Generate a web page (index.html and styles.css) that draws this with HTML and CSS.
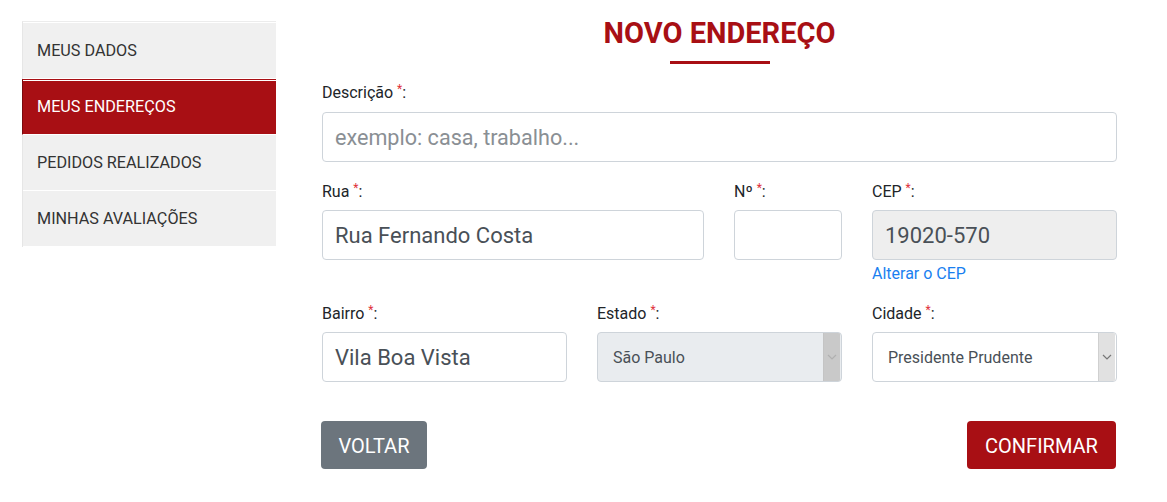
FILE: index.html
```html
<!DOCTYPE html>
<html lang="pt-BR">
<head>
<meta charset="utf-8">
<title>Novo endereço</title>
<link rel="stylesheet" href="styles.css">
</head>
<body>
<div class="page">
  <nav class="sidebar">
    <a class="side-item">MEUS DADOS</a>
    <a class="side-item active">MEUS ENDEREÇOS</a>
    <a class="side-item">PEDIDOS REALIZADOS</a>
    <a class="side-item">MINHAS AVALIAÇÕES</a>
  </nav>
  <main class="content">
    <h1 class="title">NOVO ENDEREÇO</h1>
    <div class="title-bar"></div>
    <form class="form">
      <div class="row">
        <div class="field col-12">
          <label class="label">Descrição <span class="req">*</span>:</label>
          <div class="input placeholder">exemplo: casa, trabalho...</div>
        </div>
      </div>
      <div class="row">
        <div class="field col-6">
          <label class="label">Rua <span class="req">*</span>:</label>
          <div class="input">Rua Fernando Costa</div>
        </div>
        <div class="field col-2">
          <label class="label">Nº <span class="req">*</span>:</label>
          <div class="input"></div>
        </div>
        <div class="field col-4">
          <label class="label">CEP <span class="req">*</span>:</label>
          <div class="input disabled">19020-570</div>
          <a class="link">Alterar o CEP</a>
        </div>
      </div>
      <div class="row">
        <div class="field col-4">
          <label class="label">Bairro <span class="req">*</span>:</label>
          <div class="input">Vila Boa Vista</div>
        </div>
        <div class="field col-4">
          <label class="label">Estado <span class="req">*</span>:</label>
          <div class="select disabled"><span class="select-text">São Paulo</span><span class="arrow"><svg width="10" height="6" viewBox="0 0 10 6"><path d="M1 1l4 4 4-4" fill="none" stroke="#b0b0b0" stroke-width="1.2"/></svg></span></div>
        </div>
        <div class="field col-4">
          <label class="label">Cidade <span class="req">*</span>:</label>
          <div class="select"><span class="select-text">Presidente Prudente</span><span class="arrow"><svg width="10" height="6" viewBox="0 0 10 6"><path d="M1 1l4 4 4-4" fill="none" stroke="#777" stroke-width="1.2"/></svg></span></div>
        </div>
      </div>
      <div class="actions">
        <button type="button" class="btn btn-gray">VOLTAR</button>
        <button type="button" class="btn btn-red">CONFIRMAR</button>
      </div>
    </form>
  </main>
</div>
</body>
</html>
```
FILE: styles.css
```css
* { box-sizing: border-box; }
html, body { margin: 0; padding: 0; background: #fff; }
body { font-family: Roboto, "Liberation Sans", Arial, sans-serif; color: #212529; }

.page {
  display: flex;
  align-items: flex-start;
  padding: 21px 0 0 22px;
}

.sidebar {
  width: 254px;
  display: flex;
  flex-direction: column;
  border-top: 1px solid #ececec;
  border-left: 1px solid #e6e6e6;
  padding-top: 1px;
}
.side-item {
  display: flex;
  align-items: center;
  height: 56px;
  padding-left: 14px;
  padding-bottom: 1px;
  background: #f0f0f0;
  border-bottom: 1px solid #fff;
  font-size: 16.2px;
  color: #333;
  text-decoration: none;
}
.side-item.active {
  background: #a80f14;
  color: #fff;
  border-top: 1px solid #a80f14;
  box-shadow: inset 0 1px 0 #fff;
  margin-left: -1px;
  border-left: 1px solid #7a0a0e;
  padding-left: 14px;
}

.content {
  margin-left: 46px;
  width: 795px;
}
.title {
  margin: 0;
  text-align: center;
  font-size: 29px;
  font-weight: 700;
  color: #a80f14;
  line-height: 24px;
}
.title-bar {
  width: 100px;
  height: 3px;
  background: #a80f14;
  margin: 16px auto 0;
}

.form { margin-top: 15px; }
.row {
  display: flex;
  gap: 30px;
}
.row + .row { margin-top: 16px; }
.col-12 { width: 795px; }
.col-6 { width: 382px; }
.col-2 { width: 108px; }
.col-4 { width: 245px; }

.field { display: flex; flex-direction: column; }
.label {
  font-size: 16px;
  line-height: 20px;
  color: #212529;
  margin-bottom: 8px;
}
.col-12 .label { margin-bottom: 9px; }
.req {
  color: #e0303a;
  font-size: 12px;
  vertical-align: 5px;
}
.input {
  height: 50px;
  border: 1px solid #ced4da;
  border-radius: 4px;
  padding: 0 12px;
  display: flex;
  align-items: center;
  font-size: 22px;
  color: #495057;
  background: #fff;
}
.input.placeholder { color: #8a8f94; font-size: 21.6px; }
.input.disabled { background: #eeeeee; }

.link {
  font-size: 16px;
  color: #1a7ff0;
  margin-top: 4px;
  line-height: 20px;
}

.select {
  height: 50px;
  border: 1px solid #ced4da;
  border-radius: 4px;
  display: flex;
  align-items: stretch;
  background: #fff;
  overflow: hidden;
}
.select.disabled { background: #e9ecef; }
.select-text {
  flex: 1;
  display: flex;
  align-items: center;
  padding-left: 15px;
  font-size: 16px;
  color: #495057;
}
.arrow {
  width: 17px;
  margin-right: 1px;
  display: flex;
  align-items: center;
  justify-content: center;
  background: #e1e1e1;
  border-left: 1px solid #d0d0d0;
}
.select.disabled .arrow { background: #c9c9c9; border-left-color: #c4c4c4; }

.actions {
  display: flex;
  justify-content: space-between;
  margin-top: 39px;
}
.btn {
  height: 48px;
  border: none;
  border-radius: 4px;
  color: #fff;
  font-family: Roboto, "Liberation Sans", Arial, sans-serif;
  font-size: 20px;
  padding: 2px 17px 0;
  cursor: pointer;
}
.btn-gray { background: #6c757d; width: 106px; margin-left: -1px; }
.btn-red { background: #a80f14; width: 149px; margin-right: 1px; }
```
